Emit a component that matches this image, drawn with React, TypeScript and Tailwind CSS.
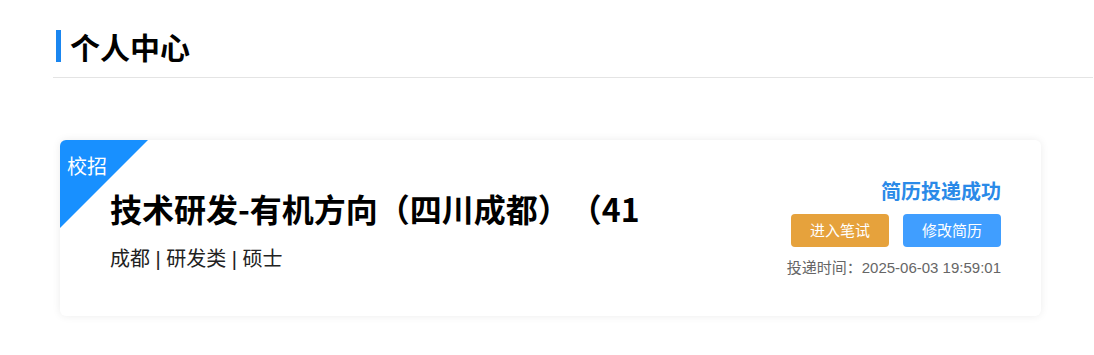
export default function App() {
  const font = { fontFamily: '"Noto Sans CJK SC", "Liberation Sans", sans-serif' };

  return (
    <div className="w-[1094px] h-[355px] bg-white [text-spacing-trim:space-all]" style={font}>
      <div className="ml-[53px] w-[1040px]">
        <div className="pt-[30px] pb-[15px] border-b border-[#e4e4e4]">
          <div className="flex items-center h-[32px] pl-[3px]">
            <span className="w-[5px] h-[32px] bg-[#1a86f0]" />
            <h1 className="ml-[9px] text-[30px] font-bold text-black leading-none">个人中心</h1>
          </div>
        </div>

        <div className="relative mt-[62px] ml-[7px] w-[981px] h-[176px] rounded-md bg-white shadow-[0_0_8px_rgba(0,0,0,0.08)] overflow-hidden">
          <div className="absolute left-0 top-0 w-[88px] h-[88px] bg-[#1890ff] [clip-path:polygon(0_0,100%_0,0_100%)]" />
          <span className="absolute left-[7px] top-[16px] text-[20px] text-white leading-none">校招</span>

          <div className="flex h-full justify-between pl-[50px] pr-[40px]">
            <div className="pt-[50px]">
              <h2 className="text-[32px] font-bold text-black leading-[36px] whitespace-nowrap">
                技术研发-有机方向（四川成都）（41
              </h2>
              <p
                className="mt-[23px] text-[20px] text-[#222] leading-none"
                style={{ fontFamily: '"Liberation Sans", "Noto Sans CJK SC", sans-serif' }}
              >
                成都 | 研发类 | 硕士
              </p>
            </div>

            <div className="flex flex-col items-end pt-[40px]">
              <div className="text-[20px] font-bold text-[#2a8ae8] leading-[22px]">简历投递成功</div>
              <div className="mt-[12px] flex gap-[14px]">
                <button className="w-[98px] h-[33px] rounded bg-[#e6a23c] text-white text-[15px]">进入笔试</button>
                <button className="w-[98px] h-[33px] rounded bg-[#409eff] text-white text-[15px]">修改简历</button>
              </div>
              <div
                className="mt-[13px] text-[15px] text-[#666] leading-none"
                style={{ fontFamily: '"Liberation Sans", "Noto Sans CJK SC", sans-serif' }}
              >
                投递时间：2025-06-03 19:59:01
              </div>
            </div>
          </div>
        </div>
      </div>
    </div>
  );
}
